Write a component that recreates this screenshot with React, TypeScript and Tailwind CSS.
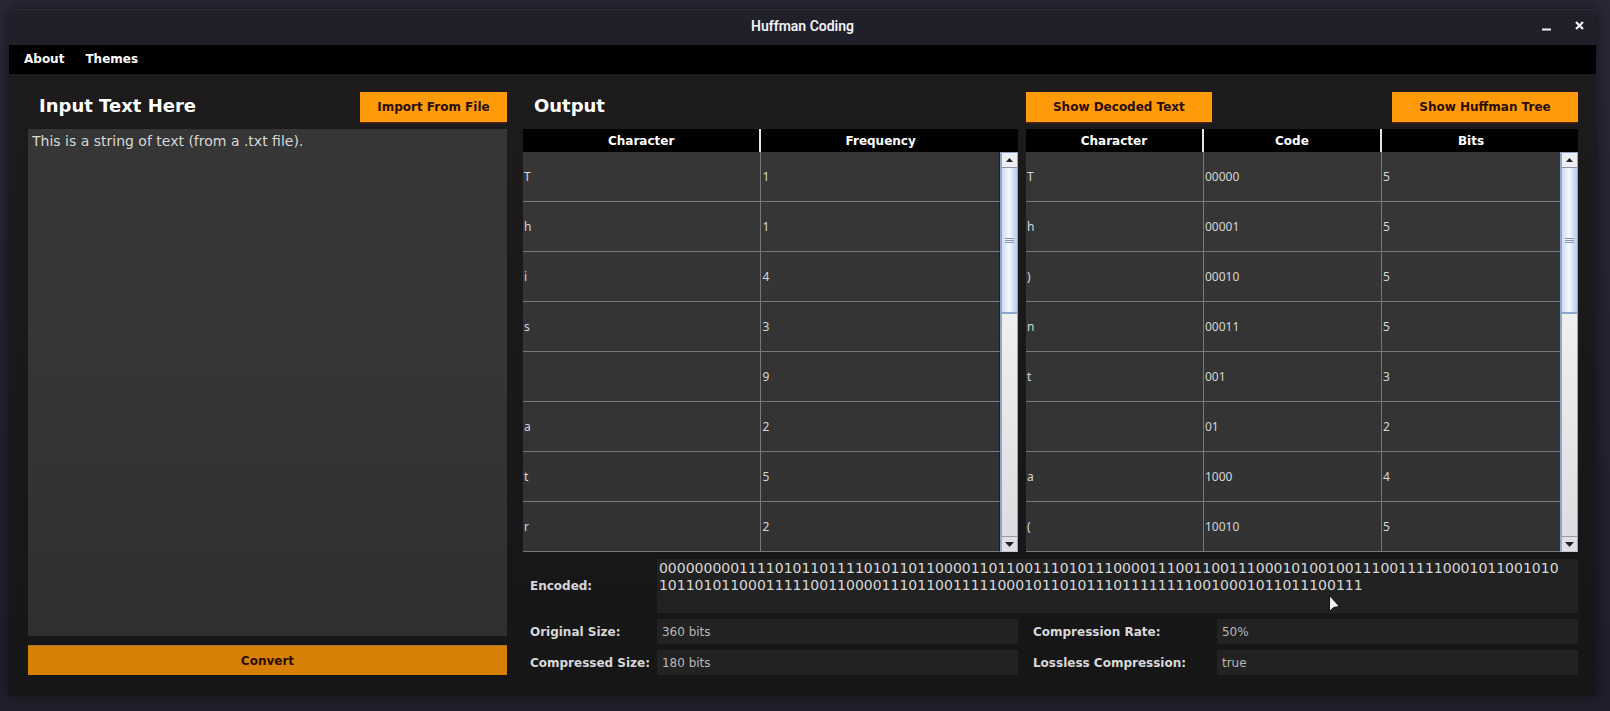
import React from 'react';

const frequencies: string[][] = [
  ['T', '1'], ['h', '1'], ['i', '4'], ['s', '3'], ['', '9'], ['a', '2'], ['t', '5'], ['r', '2'],
];

const codes: string[][] = [
  ['T', '00000', '5'], ['h', '00001', '5'], [')', '00010', '5'], ['n', '00011', '5'],
  ['t', '001', '3'], ['', '01', '2'], ['a', '1000', '4'], ['(', '10010', '5'],
];

const encoded =
  '00000000011110101101111010110110000110110011101011100001110011001110001010010011100111110001011001010' +
  '1011010110001111100110000111011001111100010110101110111111110010001011011100111';

function ScrollBar() {
  return (
    <div className="mt-[23px] flex w-[18px] shrink-0 flex-col border border-l-2 border-[#8ea6d0] border-b-[#c9c9cf] bg-[#eeeeee]">
      <button aria-label="Scroll up" className="flex h-[15px] shrink-0 items-center justify-center border-b border-[#8a93a8] bg-[#eceef4]">
        <svg width="7" height="4" viewBox="0 0 7 4"><path d="M0 4L3.500 0L7 4Z" fill="#222" /></svg>
      </button>
      <div className="flex h-[146px] flex-col items-center justify-center gap-px border-b-2 border-[#8ea6d0] bg-linear-to-r from-[#cfdcf5] via-[#f4f8ff] to-[#b9c9ea]">
        <i className="h-px w-[9px] bg-[#8796b4]" />
        <i className="h-px w-[9px] bg-[#8796b4]" />
        <i className="h-px w-[9px] bg-[#8796b4]" />
      </div>
      <div className="grow bg-linear-to-b from-[#f0f0ee] to-[#dedee2]" />
      <button aria-label="Scroll down" className="flex h-[15px] shrink-0 items-center justify-center border-t border-[#9a9aa2] bg-[#dfdfe4]">
        <svg width="9" height="5" viewBox="0 0 9 5"><path d="M0 0L4.500 5L9 0Z" fill="#222" /></svg>
      </button>
    </div>
  );
}

function DataTable({ headers, rows }: { headers: string[]; rows: string[][] }) {
  return (
    <div className="flex min-w-0 bg-black">
      <div className="min-w-0 flex-1">
        <table className="w-full table-fixed border-separate border-spacing-0">
          <thead>
            <tr className="h-[23px]">
              {headers.map((h, i) => (
                <th key={h} className={i < headers.length - 1 ? 'border-r-2 border-[#e4e4e4] p-0 text-xs leading-5 font-bold' : 'p-0 text-xs leading-5 font-bold'}>
                  {h}
                </th>
              ))}
            </tr>
          </thead>
          <tbody className="bg-linear-to-b from-[#363637] to-[#323233] font-['Noto_Sans',sans-serif] text-xs text-[#d6d6d6]">
            {rows.map((row, r) => (
              <tr key={r} className="h-[50px]">
                {row.map((cell, c) => (
                  <td key={c} className={c < row.length - 1 ? 'border-r border-b border-[#77787b] px-px py-0' : 'border-b border-[#77787b] px-px py-0'}>
                    {cell}
                  </td>
                ))}
              </tr>
            ))}
          </tbody>
        </table>
      </div>
      <ScrollBar />
    </div>
  );
}

const orange = 'flex h-[30px] items-center justify-center bg-[#ff9a08] text-xs font-bold text-[#2a0d00] shadow-[0_1px_1px_#5a2600]';
const label = 'text-xs font-bold whitespace-nowrap text-[#d8d8d8]';
const field = 'h-[25px] w-full min-w-0 bg-[#222223] px-[5px] text-xs text-[#b8b8b8] outline-none';

export default function App() {
  return (
    <div className="min-h-screen bg-linear-to-b from-[#292936] to-[#201f2b] px-[9px] pt-[9px] pb-[14px] font-['DejaVu_Sans',sans-serif] text-white">
      <div className="mr-[5px] rounded-t-lg bg-linear-to-b from-[#1e1b1d] to-[#161617] shadow-[0_0_12px_2px_rgba(12,12,18,0.6)]">
        <header className="relative flex h-9 items-center justify-center rounded-t-lg border-t border-[#30303e] bg-[#20202a] pb-1">
          <h1 className="font-[Roboto,sans-serif] text-sm font-semibold text-[#f0f0f4]">Huffman Coding</h1>
          <div className="absolute right-3 flex gap-6">
            <button aria-label="Minimize">
              <svg width="9" height="10" viewBox="0 0 9 10"><path d="M0 8.500H9" stroke="#f2f2f6" strokeWidth="2" /></svg>
            </button>
            <button aria-label="Close">
              <svg width="9" height="9" viewBox="0 0 9 9"><path d="M1 1L8 8M8 1L1 8" stroke="#f2f2f6" strokeWidth="2.200" /></svg>
            </button>
          </div>
        </header>
        <nav className="flex h-[29px] items-center gap-[21px] bg-black px-[15px] pb-0.5 text-xs font-bold">
          <button>About</button>
          <button>Themes</button>
        </nav>
        <main className="flex gap-4 pt-[18px] pr-[18px] pb-5 pl-[19px]">
          <section className="flex w-[30.9%] flex-col">
            <div className="flex h-[37px] items-start justify-between">
              <label htmlFor="input" className="pl-[11px] text-lg leading-7 font-bold">Input Text Here</label>
              <button className={orange + ' w-[147px]'}>Import From File</button>
            </div>
            <textarea
              id="input"
              className="w-full grow resize-none bg-linear-to-b from-[#363637] from-40% to-[#2f2f30] px-1 py-[3px] text-[14px] leading-[18px] text-[#d8d8d8] outline-none"
              defaultValue="This is a string of text (from a .txt file)."
            />
            <button className="mt-[9px] flex h-[30px] shrink-0 items-center justify-center border-t border-[#a87830] bg-[#d68006] text-xs font-bold text-[#2a0d00]">Convert</button>
          </section>
          <section className="min-w-0 flex-1">
            <div className="grid grid-cols-[26fr_29fr] gap-x-2">
              <h2 className="h-[37px] pl-[11px] text-lg leading-7 font-bold">Output</h2>
              <div className="flex items-start justify-between">
                <button className={orange + ' w-[186px]'}>Show Decoded Text</button>
                <button className={orange + ' w-[186px]'}>Show Huffman Tree</button>
              </div>
              <DataTable headers={['Character', 'Frequency']} rows={frequencies} />
              <DataTable headers={['Character', 'Code', 'Bits']} rows={codes} />
            </div>
            <div className="mt-[7px] grid grid-cols-[127px_1fr_199px_1fr] items-center gap-y-1.5 pl-[7px]">
              <label htmlFor="encoded" className={label}>Encoded:</label>
              <div className="relative col-span-3 flex">
                <textarea id="encoded" readOnly className="h-[54px] w-full resize-none bg-[#222223] py-px pr-3 pl-0.5 text-[14px] leading-[17px] break-all text-[#d8d8d8] outline-none" defaultValue={encoded} />
                <svg className="absolute top-[36px] left-[73%]" width="12" height="18" viewBox="0 0 12 18"><path d="M.500 .500V16.500L4.500 12.500L10.500 11.500Z" fill="#f0f0f0" stroke="#111" /></svg>
              </div>
              <label htmlFor="original" className={label}>Original Size:</label>
              <input id="original" readOnly className={field} defaultValue="360 bits" />
              <label htmlFor="rate" className={label + ' pl-[15px]'}>Compression Rate:</label>
              <input id="rate" readOnly className={field} defaultValue="50%" />
              <label htmlFor="compressed" className={label}>Compressed Size:</label>
              <input id="compressed" readOnly className={field} defaultValue="180 bits" />
              <label htmlFor="lossless" className={label + ' pl-[15px]'}>Lossless Compression:</label>
              <input id="lossless" readOnly className={field} defaultValue="true" />
            </div>
          </section>
        </main>
      </div>
    </div>
  );
}
